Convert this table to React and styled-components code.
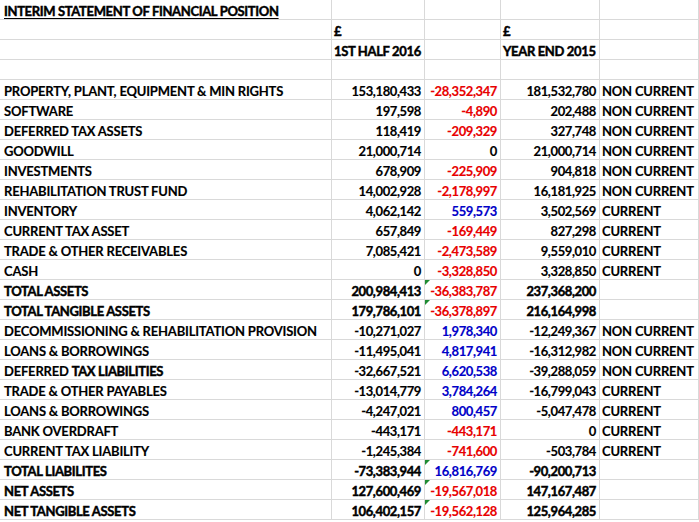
import React from 'react';
import styled, { createGlobalStyle } from 'styled-components';

const GlobalStyle = createGlobalStyle`
    html, body {
        margin     : 0;
        padding    : 0;
        background : #ffffff;
    }
`;

// 시트 전체
const Sheet = styled.div`
    display               : grid;
    grid-template-columns : 332px 93px 76px 99px 99px;
    grid-auto-rows        : 20px;
    width                 : 699px;
    font-family           : Lato, "Liberation Sans", sans-serif;
    font-size             : 13px;
    color                 : #000000;
`;

const TONES = {
    red   : '#e80000',
    blue  : '#0000c8',
    black : '#000000',
};

// 셀 하나
const Cell = styled.div`
    position        : relative;
    box-sizing      : border-box;
    display         : flex;
    align-items     : center;
    justify-content : ${p => (p.$right ? 'flex-end' : 'flex-start')};
    padding         : 2px 3px 0 ${p => (p.$first ? '4px' : '2px')};
    border-right    : 1px solid #d9d9d9;
    border-bottom   : 1px solid #d9d9d9;
    white-space     : nowrap;
    font-weight     : 700;
    color           : ${p => TONES[p.$tone || 'black']};
    letter-spacing  : ${p => (p.$num ? '-0.4px' : p.$bold ? '-0.35px' : '-0.2px')};
    -webkit-text-stroke : ${p => (p.$bold ? '0.45px' : '0.15px')} ${p => TONES[p.$tone || 'black']};
`;

// 라벨 글자 (공백 유지용)
const Label = styled.span`
    white-space : pre;
`;

// 굵게 강조된 일부 글자
const Heavy = styled.span`
    letter-spacing      : -0.35px;
    -webkit-text-stroke : 0.45px #000000;
`;

// 초록 삼각형 (수식 경고)
const Flag = styled.span`
    position     : absolute;
    top          : 0;
    left         : 0;
    width        : 0;
    height       : 0;
    border-top   : 5px solid #1e8c32;
    border-right : 5px solid transparent;
`;

const Title = styled.span`
    text-decoration       : underline;
    text-underline-offset : 2px;
`;

const rows = [
    ['PROPERTY, PLANT, EQUIPMENT & MIN RIGHTS', '153,180,433', '-28,352,347', '181,532,780', 'NON CURRENT'],
    ['SOFTWARE', '197,598', '-4,890', '202,488', 'NON CURRENT'],
    ['DEFERRED TAX ASSETS', '118,419', '-209,329', '327,748', 'NON CURRENT'],
    ['GOODWILL', '21,000,714', '0', '21,000,714', 'NON CURRENT'],
    ['INVESTMENTS', '678,909', '-225,909', '904,818', 'NON CURRENT'],
    ['REHABILITATION TRUST FUND', '14,002,928', '-2,178,997', '16,181,925', 'NON CURRENT'],
    ['INVENTORY', '4,062,142', '559,573', '3,502,569', 'CURRENT'],
    ['CURRENT TAX ASSET', '657,849', '-169,449', '827,298', 'CURRENT'],
    ['TRADE & OTHER RECEIVABLES', '7,085,421', '-2,473,589', '9,559,010', 'CURRENT'],
    ['CASH', '0', '-3,328,850', '3,328,850', 'CURRENT'],
    ['TOTAL ASSETS', '200,984,413', '-36,383,787', '237,368,200', '', true],
    ['TOTAL TANGIBLE ASSETS', '179,786,101', '-36,378,897', '216,164,998', '', true],
    ['DECOMMISSIONING & REHABILITATION PROVISION', '-10,271,027', '1,978,340', '-12,249,367', 'NON CURRENT'],
    ['LOANS & BORROWINGS', '-11,495,041', '4,817,941', '-16,312,982', 'NON CURRENT'],
    [<>DEFERRED <Heavy>TAX LIABILITIES</Heavy></>, '-32,667,521', '6,620,538', '-39,288,059', 'NON CURRENT'],
    ['TRADE & OTHER PAYABLES', '-13,014,779', '3,784,264', '-16,799,043', 'CURRENT'],
    ['LOANS & BORROWINGS', '-4,247,021', '800,457', '-5,047,478', 'CURRENT'],
    ['BANK OVERDRAFT', '-443,171', '-443,171', '0', 'CURRENT'],
    ['CURRENT TAX LIABILITY', '-1,245,384', '-741,600', '-503,784', 'CURRENT'],
    ['TOTAL LIABILITES', '-73,383,944', '16,816,769', '-90,200,713', '', true],
    ['NET ASSETS', '127,600,469', '-19,567,018', '147,167,487', '', true],
    ['NET TANGIBLE ASSETS', '106,402,157', '-19,562,128', '125,964,285', '', true],
];

const toneOf = v => {
    if (v === '0') return 'black';
    return v.startsWith('-') ? 'red' : 'blue';
};

const App = () => {
    return (
        <>
            <GlobalStyle />
            <Sheet>
                <Cell $first $bold><Title>INTERIM STATEMENT OF FINANCIAL POSITION</Title></Cell>
                <Cell /><Cell /><Cell /><Cell />

                <Cell $first /><Cell $bold>£</Cell><Cell /><Cell $bold>£</Cell><Cell />
                <Cell $first /><Cell $bold>1ST HALF 2016</Cell><Cell /><Cell $bold>YEAR END 2015</Cell><Cell />
                <Cell $first /><Cell /><Cell /><Cell /><Cell />

                {rows.map(([label, half, diff, year, kind, total], i) => (
                    <React.Fragment key={i}>
                        <Cell $first $bold={total}><Label>{label}</Label></Cell>
                        <Cell $right $num $bold={total}>{half}</Cell>
                        <Cell $right $num $tone={toneOf(diff)}>
                            {total && <Flag />}
                            {diff}
                        </Cell>
                        <Cell $right $num $bold={total}>{year}</Cell>
                        <Cell>{kind}</Cell>
                    </React.Fragment>
                ))}
            </Sheet>
        </>
    );
};

export default App;
